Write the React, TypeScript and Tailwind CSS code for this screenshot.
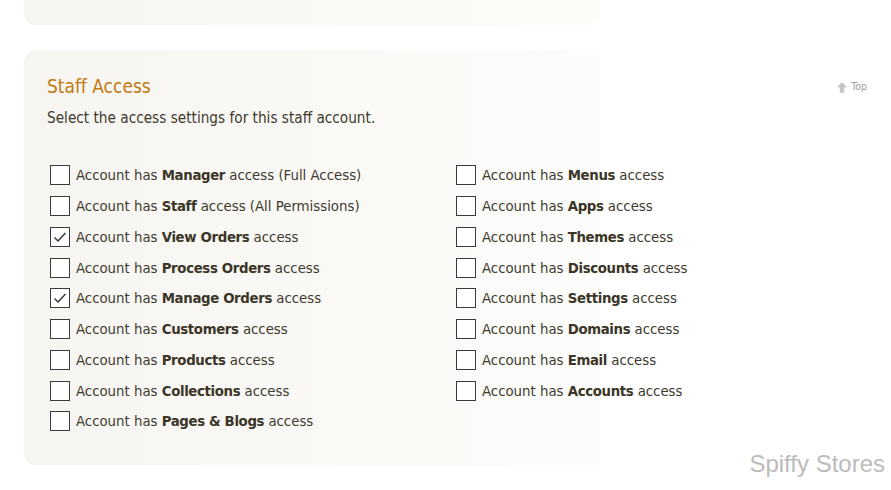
import React from "react";

const left: [string, string, string, boolean][] = [
  ["Account has ", "Manager", " access (Full Access)", false],
  ["Account has ", "Staff", " access (All Permissions)", false],
  ["Account has ", "View Orders", " access", true],
  ["Account has ", "Process Orders", " access", false],
  ["Account has ", "Manage Orders", " access", true],
  ["Account has ", "Customers", " access", false],
  ["Account has ", "Products", " access", false],
  ["Account has ", "Collections", " access", false],
  ["Account has ", "Pages & Blogs", " access", false],
];
const right: [string, string, string, boolean][] = [
  ["Account has ", "Menus", " access", false],
  ["Account has ", "Apps", " access", false],
  ["Account has ", "Themes", " access", false],
  ["Account has ", "Discounts", " access", false],
  ["Account has ", "Settings", " access", false],
  ["Account has ", "Domains", " access", false],
  ["Account has ", "Email", " access", false],
  ["Account has ", "Accounts", " access", false],
];

function Row({ item }: { item: [string, string, string, boolean] }) {
  const [a, b, c, checked] = item;
  return (
    <label className="flex h-[30.75px] items-center">
      <span className="ml-[3px] mr-[6px] flex h-[20px] w-[20px] shrink-0 items-center justify-center border border-[#3a3a3a] bg-white">
        {checked && (
          <svg width="16" height="16" viewBox="0 0 16 16" fill="none">
            <path d="M2.5 8.5 L6 12 L13.5 4" stroke="#333" strokeWidth="1.4" />
          </svg>
        )}
      </span>
      <span className="text-[14.8px] text-[#3d3a2e]">
        {a}
        <b className="font-bold tracking-[-0.35px] text-[#3a3526]">{b}</b>
        {c}
      </span>
    </label>
  );
}

export default function App() {
  return (
    <div
      className="relative h-[490px] w-[891px] overflow-hidden bg-white"
      style={{ fontFamily: '"DejaVu Sans Condensed", "DejaVu Sans", sans-serif' }}
    >
      <div className="-mt-[40px] ml-[24px] h-[65px] w-[576px] rounded-b-[12px] bg-[linear-gradient(to_right,#f7f5f1,#fcfcf9)]" />
      <section className="ml-[24px] mt-[25px] flex w-[843px] rounded-l-[12px] bg-[linear-gradient(to_right,#f7f5f1,#fcfcfa_576px,#ffffff_576px)]">
        <div className="flex-1 pb-[28px] pl-[23px] pt-[24px]">
          <h2 className="text-[19px] font-normal leading-[24px] text-[#c27a12]">Staff Access</h2>
          <p className="mt-[10px] text-[15.2px] leading-[20px] text-[#3d3a2e]">
            Select the access settings for this staff account.
          </p>
          <div className="mt-[32px] grid grid-cols-[406px_1fr]">
            <div>
              {left.map((it) => (
                <Row key={it[1]} item={it} />
              ))}
            </div>
            <div>
              {right.map((it) => (
                <Row key={it[1]} item={it} />
              ))}
            </div>
          </div>
        </div>
        <a className="mt-[30px] flex h-[14px] items-center gap-[4px] text-[10.5px] text-[#a0a0a0]">
          <svg width="10" height="11" viewBox="0 0 10 11">
            <path d="M5 0.5 L9.5 5 L6.8 5 L6.8 10.5 L3.2 10.5 L3.2 5 L0.5 5 Z" fill="#c4c4c4" stroke="#b8b8b8" strokeWidth="0.5" />
          </svg>
          Top
        </a>
      </section>
      <div className="absolute bottom-[8px] right-[6px] text-[24px] text-[#bbbbbb]" style={{ fontFamily: '"Liberation Sans", Arial, sans-serif' }}>
        Spiffy Stores
      </div>
    </div>
  );
}
